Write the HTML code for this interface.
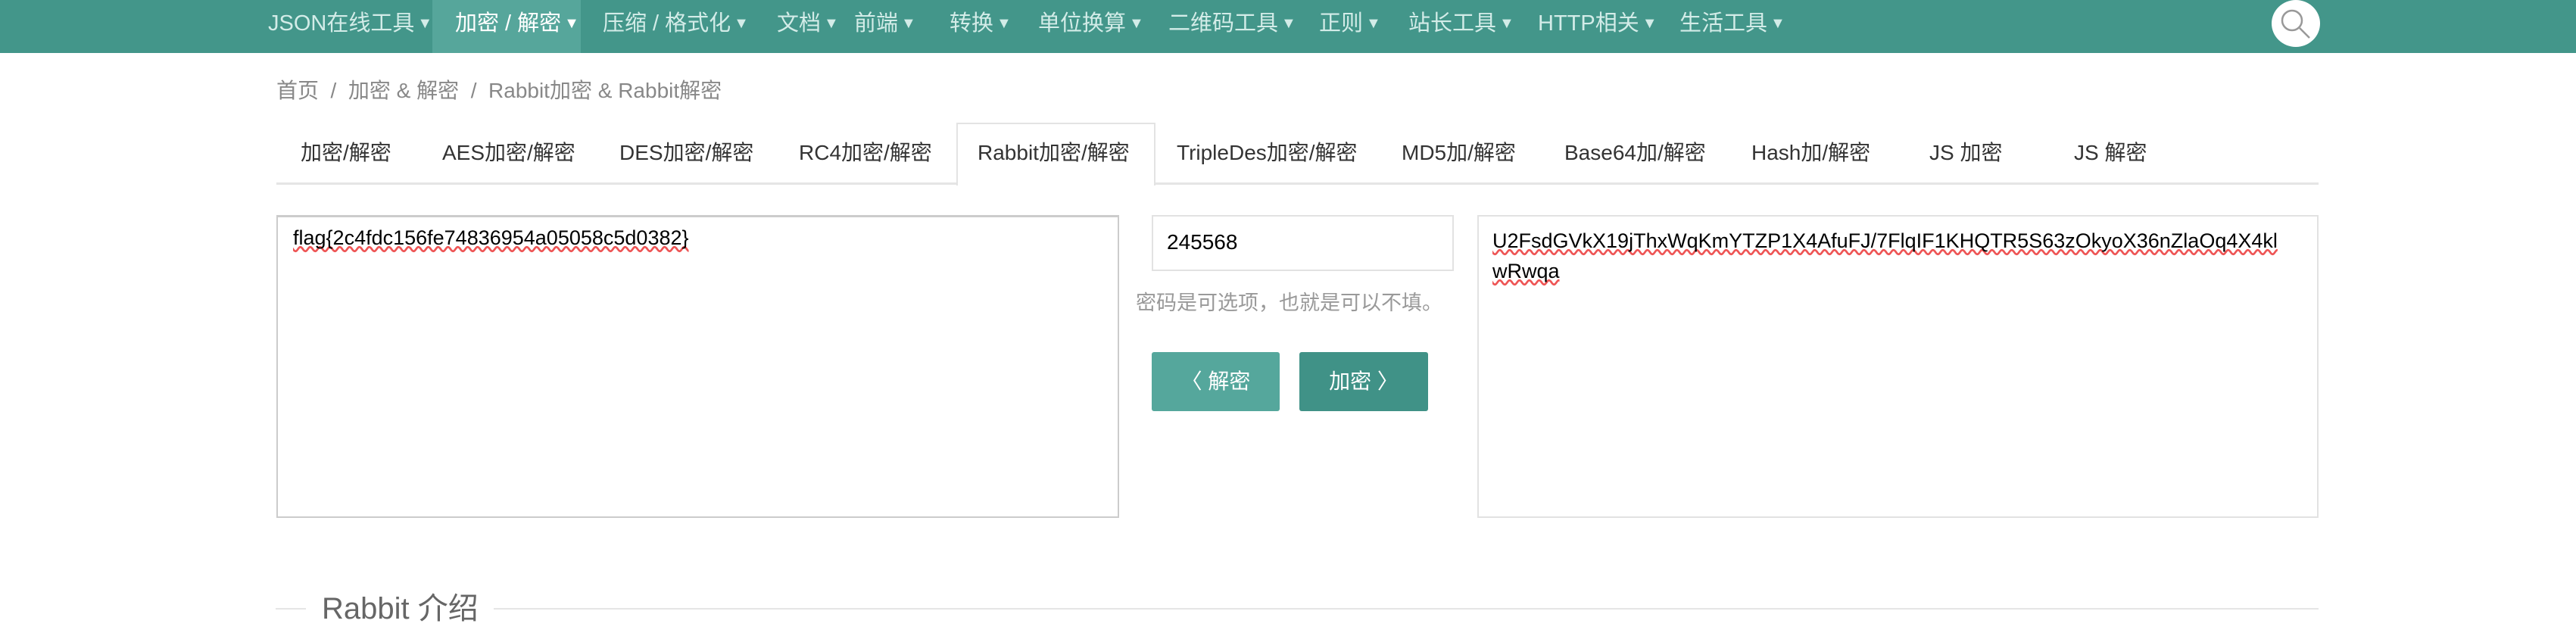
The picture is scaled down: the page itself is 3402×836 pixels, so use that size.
<!DOCTYPE html>
<html><head><meta charset="utf-8"><style>
*{margin:0;padding:0;box-sizing:border-box}
body{width:3402px;height:836px;background:#fff;position:relative;overflow:hidden;font-family:"Liberation Sans","Noto Sans CJK SC",sans-serif}
.a{position:absolute;white-space:nowrap}
.nav{position:absolute;left:0;top:0;width:3402px;height:70px;background:#43968a}
.ni{position:absolute;top:0;height:70px;line-height:62px;font-size:29px;color:#d3ece8}
.ni i{font-style:normal;font-size:20px;margin-left:4px;vertical-align:3px}
.tab{position:absolute;top:184px;font-size:28px;color:#333;line-height:36px}
.box{position:absolute;border:2px solid #e2e2e2;background:#fff}
</style></head><body>
<div class="nav"></div>
<div class="a" style="left:571px;top:0;width:196px;height:70px;background:#56a69b"></div>
<div class="ni" style="left:354px">JSON在线工具<i>▼</i></div>
<div class="ni" style="left:601px;color:#fff">加密 / 解密<i>▼</i></div>
<div class="ni" style="left:796px">压缩 / 格式化<i>▼</i></div>
<div class="ni" style="left:1026px">文档<i>▼</i></div>
<div class="ni" style="left:1128px">前端<i>▼</i></div>
<div class="ni" style="left:1254px">转换<i>▼</i></div>
<div class="ni" style="left:1371px">单位换算<i>▼</i></div>
<div class="ni" style="left:1543px">二维码工具<i>▼</i></div>
<div class="ni" style="left:1742px">正则<i>▼</i></div>
<div class="ni" style="left:1860px">站长工具<i>▼</i></div>
<div class="ni" style="left:2031px">HTTP相关<i>▼</i></div>
<div class="ni" style="left:2218px">生活工具<i>▼</i></div>
<div class="a" style="left:3000px;top:0;width:64px;height:62px;border-radius:50%;background:#fff"></div>
<svg class="a" style="left:3000px;top:0" width="64" height="62"><circle cx="27" cy="27" r="13" fill="none" stroke="#999" stroke-width="2.5"/><line x1="37" y1="37" x2="50" y2="50" stroke="#999" stroke-width="2.5"/></svg>

<div class="a" style="left:365px;top:100px;font-size:28px;color:#888;line-height:40px">首页 &nbsp;/ &nbsp;加密 &amp; 解密 &nbsp;/ &nbsp;Rabbit加密 &amp; Rabbit解密</div>

<div class="a" style="left:365px;top:241px;width:2697px;height:3px;background:#e5e5e5"></div>
<div class="a" style="left:1263px;top:162px;width:263px;height:83px;border:2px solid #e3e3e3;border-bottom:none;background:#fff"></div>
<div class="tab" style="left:397px">加密/解密</div>
<div class="tab" style="left:584px">AES加密/解密</div>
<div class="tab" style="left:818px">DES加密/解密</div>
<div class="tab" style="left:1055px">RC4加密/解密</div>
<div class="tab" style="left:1291px">Rabbit加密/解密</div>
<div class="tab" style="left:1554px">TripleDes加密/解密</div>
<div class="tab" style="left:1851px">MD5加/解密</div>
<div class="tab" style="left:2066px">Base64加/解密</div>
<div class="tab" style="left:2313px">Hash加/解密</div>
<div class="tab" style="left:2548px">JS 加密</div>
<div class="tab" style="left:2739px">JS 解密</div>

<div class="box" style="left:365px;top:284px;width:1113px;height:400px;border-color:#ccc;border-top-width:3px"><div class="a" style="left:20px;top:12px;font-size:27px;color:#000;text-decoration:underline wavy #e55;text-decoration-skip-ink:none">flag{2c4fdc156fe74836954a05058c5d0382}</div></div>
<div class="box" style="left:1521px;top:284px;width:399px;height:74px"><div class="a" style="left:18px;top:18px;font-size:28px;color:#000">245568</div></div>
<div class="a" style="left:1500px;top:378px;font-size:27px;color:#999">密码是可选项，也就是可以不填。</div>
<div class="a" style="left:1521px;top:465px;width:169px;height:78px;background:#55a79c;border-radius:3px;color:#fff;font-size:28px;line-height:78px;text-align:center">〈 解密</div>
<div class="a" style="left:1716px;top:465px;width:170px;height:78px;background:#409287;border-radius:3px;color:#fff;font-size:28px;line-height:78px;text-align:center">加密 〉</div>
<div class="box" style="left:1951px;top:284px;width:1111px;height:400px"><div style="position:absolute;left:18px;top:12px;width:1056px;font-size:27px;line-height:40px;color:#000;word-break:break-all;text-decoration:underline wavy #e55;text-decoration-skip-ink:none">U2FsdGVkX19jThxWqKmYTZP1X4AfuFJ/7FlqIF1KHQTR5S63zOkyoX36nZlaOq4X4klwRwqa</div></div>

<div class="a" style="left:364px;top:803px;width:40px;height:2px;background:#e5e5e5"></div>
<div class="a" style="left:652px;top:803px;width:2410px;height:2px;background:#e5e5e5"></div>
<div class="a" style="left:425px;top:780px;font-size:40px;color:#666;line-height:48px">Rabbit 介绍</div>
</body></html>
